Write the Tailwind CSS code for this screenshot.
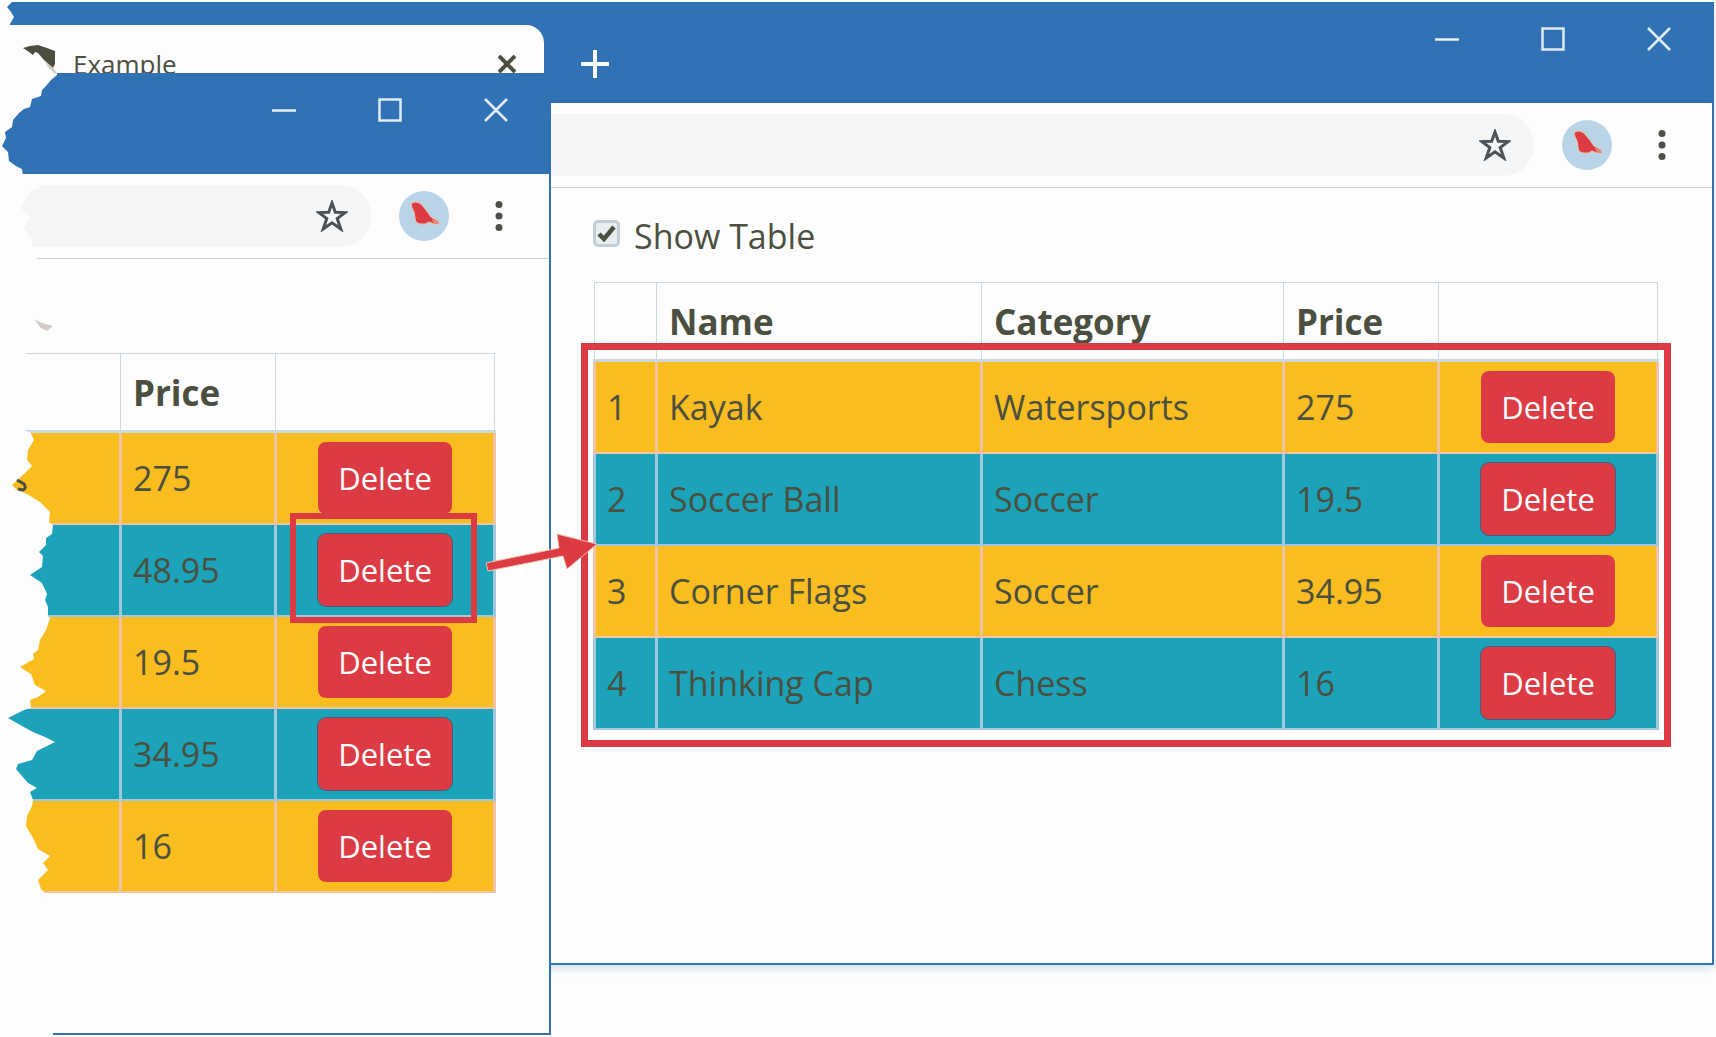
<!DOCTYPE html>
<html lang="en">
<head>
<meta charset="utf-8">
<title>Example</title>
<script src="https://cdn.jsdelivr.net/npm/@tailwindcss/browser@4"></script>
</head>
<body class="bg-[#fdfdfd] text-[#4b4f40] font-['Open_Sans','Noto_Sans',sans-serif] text-[34px] leading-[48px]">
<svg class="hidden" aria-hidden="true">
  <symbol id="min" viewBox="0 0 24 24"><path d="M0 12.500H24" stroke="#e8f1f8" stroke-width="2.500"/></symbol>
  <symbol id="max" viewBox="0 0 24 24"><rect x="1.500" y="1.500" width="21" height="21" fill="none" stroke="#e0ecf5" stroke-width="2.500"/></symbol>
  <symbol id="close" viewBox="0 0 24 24"><path d="M1 1L23 23M23 1L1 23" stroke="#e0ecf5" stroke-width="2.500"/></symbol>
  <symbol id="star" viewBox="0 0 32 32"><path d="M16 3L19.300 12.300L29 12.600L21.200 18.500L24.800 29L16 22.800L7.200 29L10.800 18.500L3 12.600L12.700 12.300Z" fill="none" stroke="#4b5358" stroke-width="3"/></symbol>
  <symbol id="bird" viewBox="0 0 50 50"><circle cx="25" cy="25" r="25" fill="#bad4e7"/><path d="M12 13Q16 9 22 13L27 19L32 26L39 30L40 33L35 33L30 31Q27 34 21 33Q16 32 16 27Q16 21 13 17Z" fill="#dd3b44" stroke="#efc3ab" stroke-width="1"/><path d="M33 28L39 30L40 33L35 33Z" fill="#e58a70"/></symbol>
  <symbol id="dots" viewBox="0 0 8 32"><circle cx="4" cy="4.500" r="3.500" fill="#4b4f48"/><circle cx="4" cy="16" r="3.500" fill="#4b4f48"/><circle cx="4" cy="27.500" r="3.500" fill="#4b4f48"/></symbol>
</svg>

<div class="relative min-h-screen overflow-hidden pt-[2px]">

  <!-- Back window -->
  <section class="mr-[2px] border-r-2 border-b-2 border-[#3072b4] shadow-[0_4px_8px_#d8e0e8]">
    <header class="flex h-[101px] items-start bg-[#3072b4]">
      <div class="mt-[23px] flex h-[78px] w-[544px] items-start rounded-tr-[18px] bg-[#fdfdfd] pt-[20px] pr-[28px] pl-[73px] text-[26px] leading-[38px]">
        <span class="flex-1">Example</span>
        <button type="button" aria-label="Close tab" class="mt-[10px]"><svg class="size-[18px]" viewBox="0 0 18 18"><path d="M1 1L17 17M17 1L1 17" stroke="#4b4f40" stroke-width="4"/></svg></button>
      </div>
      <button type="button" aria-label="New tab" class="mt-[48px] ml-[37px]"><svg class="size-[28px]" viewBox="0 0 28 28"><path d="M14 0V28M0 14H28" stroke="#fdfdfd" stroke-width="4"/></svg></button>
      <div class="ml-auto flex gap-[82px] pt-[25px] pr-[41px]">
        <button type="button" aria-label="Minimize"><svg class="size-[24px]"><use href="#min"/></svg></button>
        <button type="button" aria-label="Maximize"><svg class="size-[24px]"><use href="#max"/></svg></button>
        <button type="button" aria-label="Close"><svg class="size-[24px]"><use href="#close"/></svg></button>
      </div>
    </header>
    <div class="flex h-[85px] items-center border-b border-[#c5d0d8] pl-[551px] pr-[46px]">
      <div class="flex h-[62px] min-w-0 flex-1 items-center rounded-r-full bg-[#f3f5f7] pr-[23px]">
        <input type="text" aria-label="Address" class="h-full min-w-0 flex-1 bg-transparent px-4 outline-none">
        <button type="button" aria-label="Bookmark"><svg class="size-[32px]"><use href="#star"/></svg></button>
      </div>
      <button type="button" aria-label="Profile" class="ml-[28px]"><svg class="size-[50px]"><use href="#bird"/></svg></button>
      <button type="button" aria-label="Menu" class="ml-[46px]"><svg class="h-[32px] w-[8px]"><use href="#dots"/></svg></button>
    </div>
    <main class="pt-[24px] pr-[53px] pb-[233px] pl-[593px]">
      <label class="flex h-[48px] items-center gap-[14px]">
        <span class="relative -mt-[5px] block size-[27px]">
          <input type="checkbox" checked class="block size-[27px] appearance-none rounded-[5px] border-3 border-[#c3ced6] bg-[#e9eef1]">
          <svg class="pointer-events-none absolute inset-0 size-[27px]" viewBox="0 0 27 27"><path d="M6 14L11 19L21 7" fill="none" stroke="#4b4f40" stroke-width="4.500"/></svg>
        </span>
        <span>Show Table</span>
      </label>
      <div class="relative mt-[22px]">
        <table class="w-full table-fixed border-collapse text-left">
          <colgroup><col class="w-[62px]"><col><col class="w-[302px]"><col class="w-[155px]"><col class="w-[219px]"></colgroup>
          <thead>
            <tr class="h-[78px] *:border *:border-[#cdd9e0] *:border-b-3 *:px-[12px] *:pt-[2px] *:text-[35px] *:font-bold">
              <th></th><th>Name</th><th>Category</th><th>Price</th><th></th>
            </tr>
          </thead>
          <tbody>
            <tr class="h-[92px] bg-[#fabd20] *:border-x-3 *:border-b-2 *:border-[#f1c3a5] *:px-[11px]">
              <td>1</td><td>Kayak</td><td>Watersports</td><td>275</td>
              <td class="text-center"><button type="button" class="h-[72px] w-[134px] rounded-[8px] bg-[#dd3b44] align-middle text-[31px] text-[#fdfdfd]">Delete</button></td>
            </tr>
            <tr class="h-[92px] bg-[#1ca3b9] *:border-x-3 *:border-b-2 *:border-[#a2c6de] *:px-[11px]">
              <td>2</td><td>Soccer Ball</td><td>Soccer</td><td>19.5</td>
              <td class="text-center"><button type="button" class="h-[72px] w-[134px] rounded-[8px] bg-[#dd3b44] align-middle text-[31px] text-[#fdfdfd] outline outline-[#4a5a78]">Delete</button></td>
            </tr>
            <tr class="h-[92px] bg-[#fabd20] *:border-x-3 *:border-b-2 *:border-[#f1c3a5] *:px-[11px]">
              <td>3</td><td>Corner Flags</td><td>Soccer</td><td>34.95</td>
              <td class="text-center"><button type="button" class="h-[72px] w-[134px] rounded-[8px] bg-[#dd3b44] align-middle text-[31px] text-[#fdfdfd]">Delete</button></td>
            </tr>
            <tr class="h-[92px] bg-[#1ca3b9] *:border-x-3 *:border-b-2 *:border-[#a2c6de] *:px-[11px]">
              <td>4</td><td>Thinking Cap</td><td>Chess</td><td>16</td>
              <td class="text-center"><button type="button" class="h-[72px] w-[134px] rounded-[8px] bg-[#dd3b44] align-middle text-[31px] text-[#fdfdfd] outline outline-[#4a5a78]">Delete</button></td>
            </tr>
          </tbody>
        </table>
        <div class="pointer-events-none absolute top-[61px] -right-[12px] -bottom-[17px] -left-[12px] border-7 border-[#dd3b44]"></div>
      </div>
    </main>
  </section>

  <!-- Front window -->
  <section class="absolute top-[73px] left-0 w-[551px] border-r-2 border-b-2 border-[#3072b4] bg-[#fdfdfd]">
    <header class="-mr-[2px] flex h-[101px] items-start justify-end gap-[82px] bg-[#3072b4] pt-[25px] pr-[43px]">
      <button type="button" aria-label="Minimize"><svg class="size-[24px]"><use href="#min"/></svg></button>
      <button type="button" aria-label="Maximize"><svg class="size-[24px]"><use href="#max"/></svg></button>
      <button type="button" aria-label="Close"><svg class="size-[24px]"><use href="#close"/></svg></button>
    </header>
    <div class="flex h-[85px] items-center border-b border-[#c5d0d8] pr-[46px]">
      <div class="flex h-[62px] min-w-0 flex-1 items-center rounded-r-full bg-[#f3f5f7] pr-[23px]">
        <input type="text" aria-label="Address" class="h-full min-w-0 flex-1 bg-transparent px-4 outline-none">
        <button type="button" aria-label="Bookmark"><svg class="size-[32px]"><use href="#star"/></svg></button>
      </div>
      <button type="button" aria-label="Profile" class="ml-[28px]"><svg class="size-[50px]"><use href="#bird"/></svg></button>
      <button type="button" aria-label="Menu" class="ml-[46px]"><svg class="h-[32px] w-[8px]"><use href="#dots"/></svg></button>
    </div>
    <div class="pt-[94px] pr-[53px] pb-[140px]">
      <table class="w-full table-fixed border-collapse text-left">
        <colgroup><col><col class="w-[155px]"><col class="w-[219px]"></colgroup>
        <thead>
          <tr class="h-[78px] *:border *:border-[#cdd9e0] *:border-b-3 *:px-[12px] *:pt-[2px] *:text-[35px] *:font-bold">
            <th></th><th>Price</th><th></th>
          </tr>
        </thead>
        <tbody>
          <tr class="h-[92px] bg-[#fabd20] *:border-x-3 *:border-b-2 *:border-[#f1c3a5] *:px-[11px]">
            <td></td><td>275</td>
            <td class="text-center"><button type="button" class="h-[72px] w-[134px] rounded-[8px] bg-[#dd3b44] align-middle text-[31px] text-[#fdfdfd]">Delete</button></td>
          </tr>
          <tr class="h-[92px] bg-[#1ca3b9] *:border-x-3 *:border-b-2 *:border-[#a2c6de] *:px-[11px]">
            <td></td><td>48.95</td>
            <td class="relative text-center"><button type="button" class="h-[72px] w-[134px] rounded-[8px] bg-[#dd3b44] align-middle text-[31px] text-[#fdfdfd] outline outline-[#4a5a78]">Delete</button>
              <div class="pointer-events-none absolute -top-[12px] right-[16px] -bottom-[8px] left-[13px] border-6 border-[#dd3b44]"></div></td>
          </tr>
          <tr class="h-[92px] bg-[#fabd20] *:border-x-3 *:border-b-2 *:border-[#f1c3a5] *:px-[11px]">
            <td></td><td>19.5</td>
            <td class="text-center"><button type="button" class="h-[72px] w-[134px] rounded-[8px] bg-[#dd3b44] align-middle text-[31px] text-[#fdfdfd]">Delete</button></td>
          </tr>
          <tr class="h-[92px] bg-[#1ca3b9] *:border-x-3 *:border-b-2 *:border-[#a2c6de] *:px-[11px]">
            <td></td><td>34.95</td>
            <td class="text-center"><button type="button" class="h-[72px] w-[134px] rounded-[8px] bg-[#dd3b44] align-middle text-[31px] text-[#fdfdfd] outline outline-[#4a5a78]">Delete</button></td>
          </tr>
          <tr class="h-[92px] bg-[#fabd20] *:border-x-3 *:border-b-2 *:border-[#f1c3a5] *:px-[11px]">
            <td></td><td>16</td>
            <td class="text-center"><button type="button" class="h-[72px] w-[134px] rounded-[8px] bg-[#dd3b44] align-middle text-[31px] text-[#fdfdfd]">Delete</button></td>
          </tr>
        </tbody>
      </table>
    </div>
  </section>

  <!-- Torn left edge, and the arrow between the windows -->
  <svg class="pointer-events-none absolute top-0 left-0 h-[1037px] w-[620px]" viewBox="0 0 620 1037" aria-hidden="true">
    <path fill="#fdfdfd" d="M0 0H14L12 2L7 7L11 12L14 17L10 24V60L57 72L57 75L51 80L46 86L42 90L41 96L32 99L30 107L24 109L19 113L13 120L12 127L5 132L6 138L2 146L8 152L9 161L16 166L22 169L23 176L34 182L41 187L30 192L21 208L30 217L24 228L32 240L32 248L37 256V262L26 300V350L25 431L30 432L34 440L28 450L27 460L32 466L24 474L12 485L17 490L27 494L40 502L50 512L49 522L53 525L52 534L46 538L46 545L39 552L43 556L42 567L30 575L42 583L47 594L45 600L48 607L48 616L50 618L46 630L40 640L38 650L33 654L34 659L20 667L31 674L35 685L46 691L38 697L30 700L31 708L24 710L8 718L22 726L33 732L45 737L55 742L37 751L32 760L18 764L16 769L28 783L37 788L30 792L33 800L32 806L27 816L26 826L34 840L38 849L50 856L43 863L48 870L38 880L41 889L46 894L53 1030V1037H0Z"/>
    <path fill="#4b4f40" d="M23 48L30 46L38 45L47 48L55 51V64L53 68L44 60L38 53L35 52L33 55L29 52Z"/>
    <path fill="#d8c8bc" d="M44 60L53 68L57 73L54 73L48 67Z"/>
    <path fill="#d3cdc9" d="M34 319L42 323L53 326L47 331L41 328Z"/>
    <path fill="none" stroke="#4b4f40" stroke-width="3" d="M17 480L24 484Q27 488 23 490L18 489"/>
    <path fill="#dd3b44" stroke="#efc3ab" stroke-width="1" d="M486 563L559 548L557 534L597 544L567 569L563 556L488 571Z"/>
  </svg>
</div>
</body>
</html>
